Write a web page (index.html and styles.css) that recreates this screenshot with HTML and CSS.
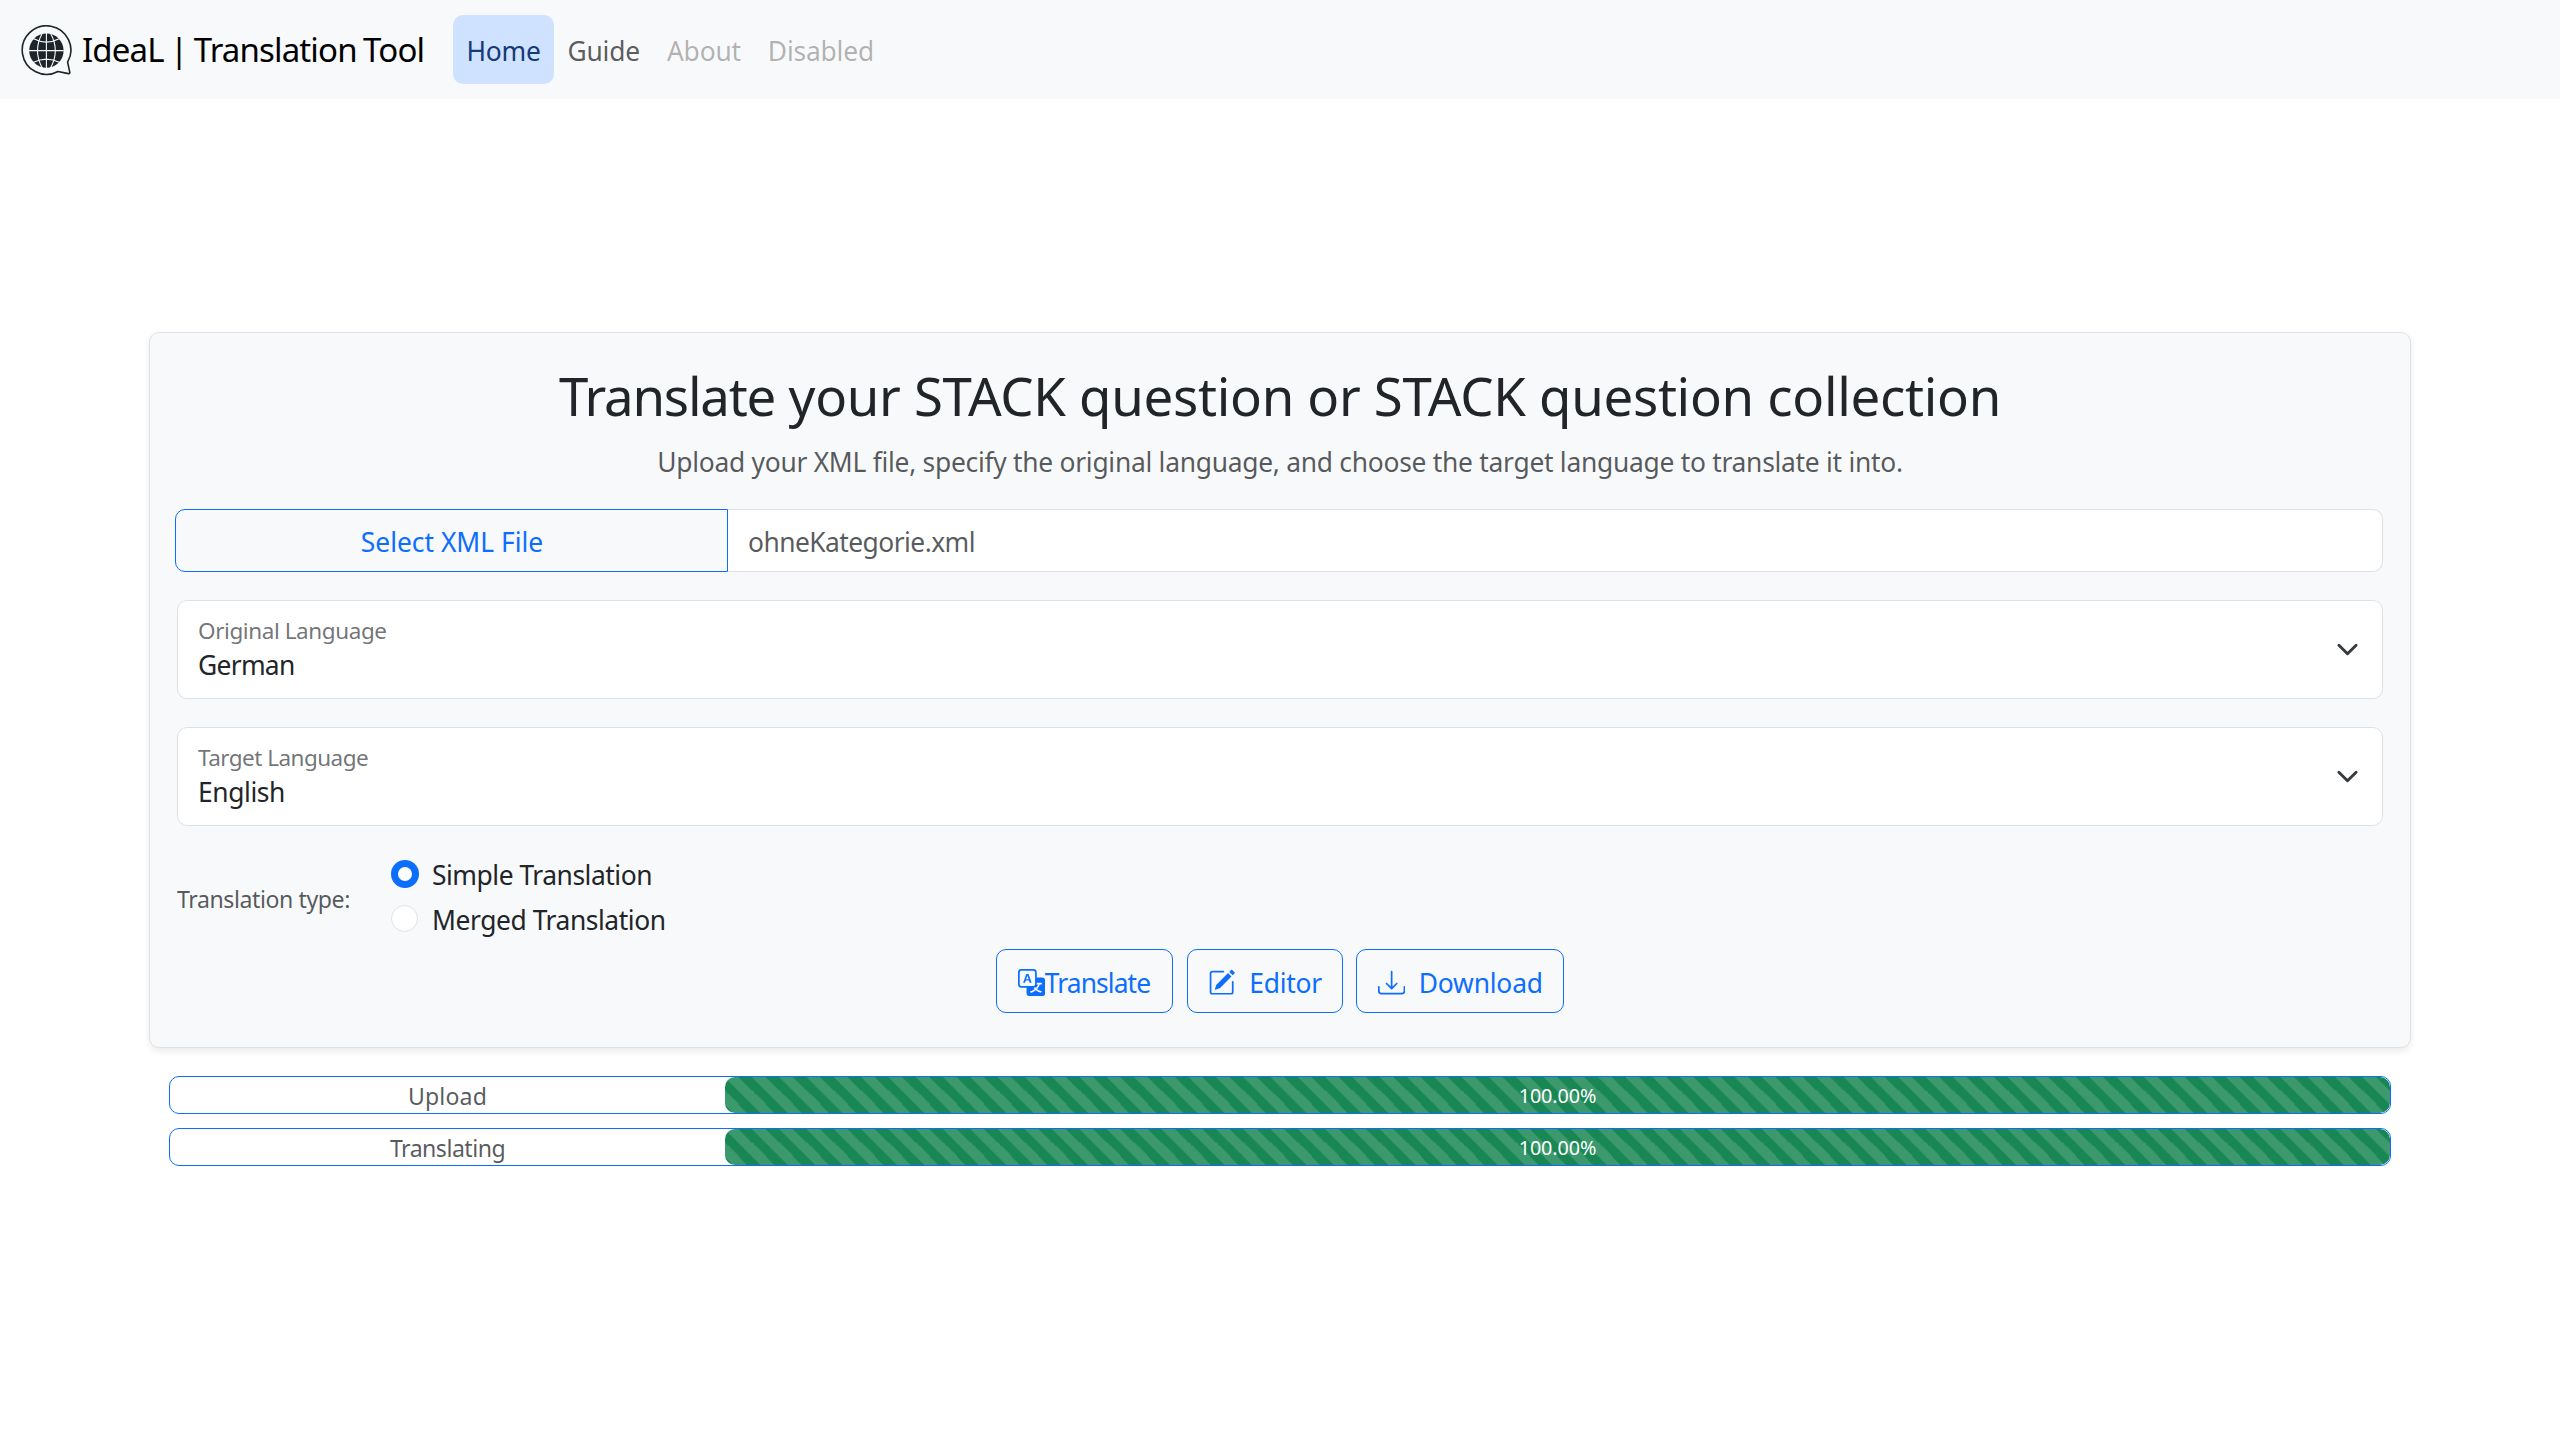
FILE: index.html
```html
<!DOCTYPE html>
<html lang="en">
<head>
<meta charset="utf-8">
<title>IdeaL | Translation Tool</title>
<link rel="stylesheet" href="styles.css">
</head>
<body>
<nav class="navbar">
  <a class="brand">
    <svg class="logo" viewBox="0 0 51 51" aria-hidden="true">
      <path class="logo-bubble" d="M46.6 37.2A24.3 24.3 0 1 0 37 46.5L47.4 48.6Q49 48.8 48.8 47.3Z"/>
      <circle class="logo-globe" cx="25.4" cy="25.6" r="17.2"/>
      <path class="logo-grid" d="M25.4 8v35.2M8 25.6h34.8M12 13.6Q25.4 20.6 38.8 13.6M12 37.6Q25.4 30.6 38.8 37.6M21.4 8Q11.6 25.6 21.4 43.2M29.4 8Q39.2 25.6 29.4 43.2"/>
    </svg>
    <span>IdeaL | Translation Tool</span>
  </a>
  <div class="nav-links">
    <a class="nav-link active">Home</a>
    <a class="nav-link">Guide</a>
    <a class="nav-link disabled">About</a>
    <a class="nav-link disabled">Disabled</a>
  </div>
</nav>

<main class="content">
  <section class="card">
    <h1 class="title"><span class="title-verb">Translate</span> your STACK question or STACK question collection</h1>
    <p class="lead">Upload your XML file, specify the original language, and choose the target language to translate it into.</p>

    <div class="file-group">
      <button class="file-button" type="button">Select XML File</button>
      <div class="file-name">ohneKategorie.xml</div>
    </div>

    <div class="select">
      <div class="select-text">
        <span class="select-label">Original Language</span>
        <span class="select-value german">German</span>
      </div>
      <svg class="chevron" viewBox="0 0 16 16" aria-hidden="true"><path d="m2 5 6 6 6-6"/></svg>
    </div>

    <div class="select">
      <div class="select-text">
        <span class="select-label target">Target Language</span>
        <span class="select-value english">English</span>
      </div>
      <svg class="chevron" viewBox="0 0 16 16" aria-hidden="true"><path d="m2 5 6 6 6-6"/></svg>
    </div>

    <div class="type-row">
      <span class="type-label">Translation type:</span>
      <div class="radios">
        <label class="radio"><span class="dot checked"></span><span class="simple">Simple Translation</span></label>
        <label class="radio"><span class="dot"></span><span class="merged">Merged Translation</span></label>
      </div>
    </div>

    <div class="actions">
      <button class="btn btn-translate" type="button">
        <svg class="icon" viewBox="0 0 16 16" aria-hidden="true"><path d="M4.545 6.714 4.11 8H3l1.862-5h1.284L8 8H6.833l-.435-1.286zm1.634-.736L5.5 3.956h-.049l-.679 2.022z"/><path d="M0 2a2 2 0 0 1 2-2h7a2 2 0 0 1 2 2v3h3a2 2 0 0 1 2 2v7a2 2 0 0 1-2 2H7a2 2 0 0 1-2-2v-3H2a2 2 0 0 1-2-2zm2-1a1 1 0 0 0-1 1v7a1 1 0 0 0 1 1h7a1 1 0 0 0 1-1V2a1 1 0 0 0-1-1zm7.138 9.995q.289.451.63.846c-.748.575-1.673 1.001-2.768 1.292.178.217.451.635.555.867 1.125-.359 2.08-.844 2.886-1.494.777.665 1.739 1.165 2.93 1.472.133-.254.414-.673.629-.89-1.125-.253-2.057-.694-2.82-1.284.681-.747 1.222-1.651 1.621-2.757H14V8h-3v1.047h.765c-.318.844-.74 1.546-1.272 2.13a6 6 0 0 1-.415-.492 2 2 0 0 1-.94.31"/></svg>
        <span>Translate</span>
      </button>
      <button class="btn btn-editor" type="button">
        <svg class="icon" viewBox="0 0 16 16" aria-hidden="true"><path d="M15.502 1.94a.5.5 0 0 1 0 .706L14.459 3.69l-2-2L13.502.646a.5.5 0 0 1 .707 0l1.293 1.293zm-1.75 2.456-2-2L4.939 9.21a.5.5 0 0 0-.121.196l-.805 2.414a.25.25 0 0 0 .316.316l2.414-.805a.5.5 0 0 0 .196-.12l6.813-6.814z"/><path fill-rule="evenodd" d="M1 13.5A1.5 1.5 0 0 0 2.5 15h11a1.5 1.5 0 0 0 1.5-1.5v-6a.5.5 0 0 0-1 0v6a.5.5 0 0 1-.5.5h-11a.5.5 0 0 1-.5-.5v-11a.5.5 0 0 1 .5-.5H9a.5.5 0 0 0 0-1H2.5A1.5 1.5 0 0 0 1 2.5z"/></svg>
        <span>Editor</span>
      </button>
      <button class="btn btn-download" type="button">
        <svg class="icon" viewBox="0 0 16 16" aria-hidden="true"><path d="M.5 9.9a.5.5 0 0 1 .5.5v2.5a1 1 0 0 0 1 1h12a1 1 0 0 0 1-1v-2.5a.5.5 0 0 1 1 0v2.5a2 2 0 0 1-2 2H2a2 2 0 0 1-2-2v-2.5a.5.5 0 0 1 .5-.5"/><path d="M7.646 11.854a.5.5 0 0 0 .708 0l3-3a.5.5 0 0 0-.708-.708L8.5 10.293V1.5a.5.5 0 0 0-1 0v8.793L5.354 8.146a.5.5 0 1 0-.708.708z"/></svg>
        <span>Download</span>
      </button>
    </div>
  </section>

  <section class="progress-list">
    <div class="progress">
      <span class="progress-label upload">Upload</span>
      <div class="progress-track"><div class="progress-bar" style="width:100%">100.00%</div></div>
    </div>
    <div class="progress">
      <span class="progress-label translating">Translating</span>
      <div class="progress-track"><div class="progress-bar" style="width:100%">100.00%</div></div>
    </div>
  </section>
</main>
</body>
</html>
```
FILE: styles.css
```css
* { box-sizing: border-box; }

body {
  margin: 0;
  min-height: 1440px;
  background: #fff;
  color: #212529;
  font-family: "Noto Sans", "Open Sans", sans-serif;
  font-size: 26.4px;
  line-height: 41px;
}

button { font: inherit; margin: 0; }

/* Navigation */
.navbar {
  display: flex;
  align-items: center;
  height: 99px;
  padding-left: 21px;
  background: #f8f9fa;
}
.brand {
  display: flex;
  align-items: center;
  gap: 10px;
  width: 432px;
  color: #000;
  font-size: 33px;
  letter-spacing: -0.85px;
  word-spacing: -1.3px;
  white-space: nowrap;
}
.logo { width: 51px; height: 51px; margin-top: 2px; flex: none; }
.logo-bubble { fill: none; stroke: #1c2529; stroke-width: 1.6; stroke-linejoin: round; }
.logo-globe { fill: #1c2529; }
.logo-grid { fill: none; stroke: #f8f9fa; stroke-width: 1.1; }

.nav-links { display: flex; letter-spacing: -.2px; }
.nav-link {
  height: 69px;
  padding: 16px 13.5px 0;
  border-radius: 10px;
  color: rgba(0, 0, 0, .65);
}
.nav-link.active { width: 101px; background: #cfe2ff; color: #153b78; }
.nav-link.disabled { color: rgba(0, 0, 0, .3); }

/* Form card */
.content { padding: 233px 149px 0; }
.card {
  height: 716px;
  padding: 30px 27px 0;
  border: 1px solid #dee2e6;
  border-radius: 10px;
  background: #f8f9fa;
  box-shadow: 0 3.4px 6.8px rgba(0, 0, 0, .075);
}
.title {
  margin: 0;
  font-size: 52.75px;
  font-weight: 400;
  line-height: 66px;
  letter-spacing: -0.3px;
  text-align: center;
}
.title-verb { letter-spacing: -1.2px; }
.lead {
  margin: 13px 0 26px;
  color: rgba(33, 37, 41, .75);
  letter-spacing: -0.27px;
  text-align: center;
}

.file-group { display: flex; height: 63px; margin-left: -2px; }
.file-button {
  width: 553px;
  padding: 3px 0 0 1px;
  border: 1px solid #0d6efd;
  border-radius: 10px 0 0 10px;
  background: transparent;
  color: #0d6efd;
}
.file-name {
  flex: 1;
  padding: 12px 20px 0;
  border: 1px solid #dee2e6;
  border-left: 0;
  border-radius: 0 10px 10px 0;
  background: #fff;
  color: rgba(33, 37, 41, .75);
  letter-spacing: -.55px;
}

.select {
  display: flex;
  align-items: center;
  justify-content: space-between;
  height: 99px;
  margin-top: 28px;
  padding: 0 23px 0 20px;
  border: 1px solid #dee2e6;
  border-radius: 10px;
  background: #fff;
}
.select-text { display: flex; flex-direction: column; padding-bottom: 2px; }
.select-label {
  color: rgba(33, 37, 41, .65);
  font-size: 22.5px;
  line-height: 34px;
  letter-spacing: -.42px;
}
.select-label.target { letter-spacing: -.53px; }
.select-value { line-height: 35px; }
.german { letter-spacing: -.7px; }
.english { letter-spacing: -.4px; }
.chevron { width: 23px; height: 23px; }
.chevron path {
  fill: none;
  stroke: #343a40;
  stroke-width: 2;
  stroke-linecap: round;
  stroke-linejoin: round;
}

.type-row { display: flex; align-items: center; margin-top: 28px; }
.type-label {
  width: 214px;
  padding-top: 5px;
  color: rgba(33, 37, 41, .75);
  font-size: 23.1px;
  letter-spacing: -.42px;
}
.radios { display: flex; flex-direction: column; gap: 3.5px; }
.radio { display: flex; align-items: center; gap: 14px; height: 41px; }
.radio > span:last-child { padding-top: 2px; }
.dot {
  width: 27px;
  height: 27px;
  margin-top: -1px;
  border: 1px solid #dee2e6;
  border-radius: 50%;
  background: #fff;
}
.dot.checked { width: 28px; height: 28px; margin-right: -1px; border: 7.5px solid #0d6efd; }
.simple { letter-spacing: -.47px; }
.merged { letter-spacing: -.43px; }

.actions { display: flex; justify-content: center; gap: 13.5px; margin-top: 9.5px; }
.btn {
  display: flex;
  align-items: center;
  gap: 14px;
  height: 64px;
  padding: 3px 0 0 20.5px;
  border: 1px solid #0d6efd;
  border-radius: 10px;
  background: transparent;
  color: #0d6efd;
}
.btn span { padding-top: 2px; }
.icon { width: 27.3px; height: 27.3px; flex: none; fill: currentColor; }
.btn-translate { width: 177px; gap: 0; letter-spacing: -.9px; }
.btn-editor { width: 156px; letter-spacing: -.25px; }
.btn-download { width: 208px; letter-spacing: -.2px; }

/* Progress bars */
.progress-list { display: flex; flex-direction: column; gap: 14px; padding: 28px 20px 0; }
.progress {
  display: flex;
  height: 38px;
  border: 1px solid #0d6efd;
  border-radius: 10px;
  overflow: hidden;
}
.progress-label {
  width: 555px;
  color: rgba(33, 37, 41, .75);
  font-size: 23.1px;
  line-height: 38px;
  text-align: center;
}
.upload { letter-spacing: .15px; }
.translating { letter-spacing: -.5px; }
.progress-track { flex: 1; }
.progress-bar {
  height: 36px;
  border-radius: 10px;
  background-color: #198754;
  background-image: linear-gradient(45deg, rgba(255, 255, 255, .15) 25%, transparent 25%, transparent 50%, rgba(255, 255, 255, .15) 50%, rgba(255, 255, 255, .15) 75%, transparent 75%, transparent);
  background-size: 27.3px 27.3px;
  color: #fff;
  font-size: 19.8px;
  letter-spacing: -.1px;
  line-height: 38px;
  text-align: center;
}
```
